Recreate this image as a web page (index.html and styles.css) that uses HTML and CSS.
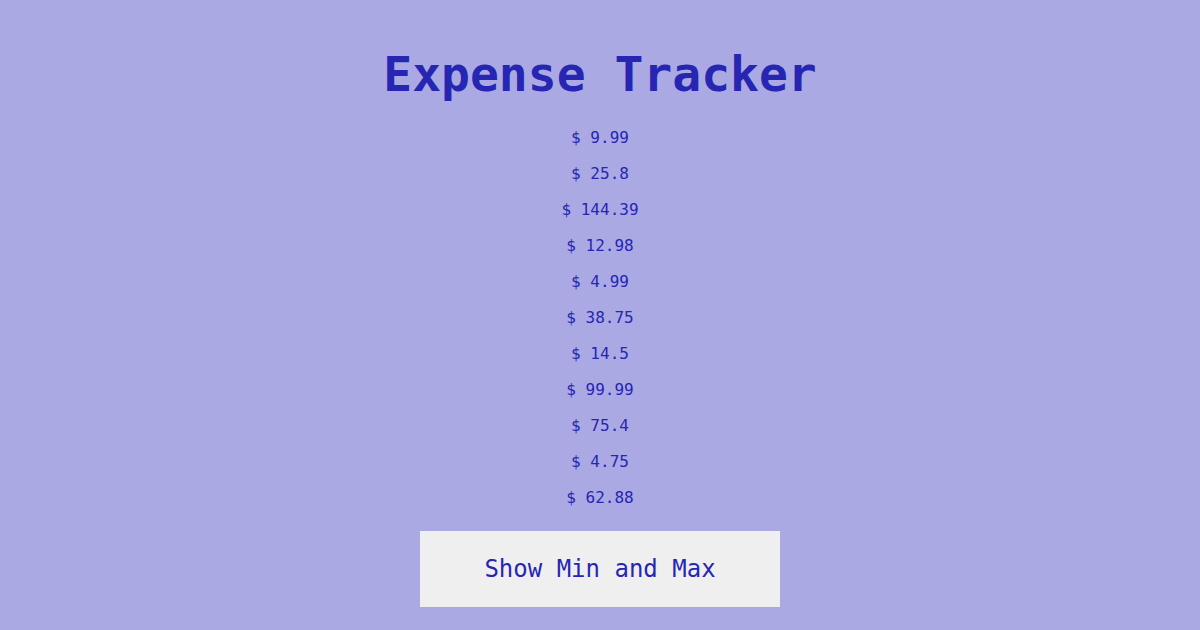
FILE: index.html
```html
<!DOCTYPE html>
<html lang="en">
<head>
    <meta charset="UTF-8">
    <meta name="viewport" content="width=device-width, initial-scale=1.0">
    <title>Expense Tracker</title>
    <link rel="stylesheet" href="styles.css">
</head>
<body>
    <div class="container">
        <h1>Expense Tracker</h1>

        <ul class="expenses" id="expenses">
            <li>$ 9.99</li>
            <li>$ 25.8</li>
            <li>$ 144.39</li>
            <li>$ 12.98</li>
            <li>$ 4.99</li>
            <li>$ 38.75</li>
            <li>$ 14.5</li>
            <li>$ 99.99</li>
            <li>$ 75.4</li>
            <li>$ 4.75</li>
            <li>$ 62.88</li>
        </ul>

        <button id="minMaxButton">Show Min and Max</button>
    </div>
</body>
</html>
```

FILE: styles.css
```css
:root {
    --bg-color: #aaa9e3;
    --text-color: #2626b3;
    --button-color: #efefef;
}

* {
    box-sizing: border-box;
    margin: 0;
    padding: 0;
    font-family: 'DejaVu Sans Mono', 'Liberation Mono', monospace;
}

body {
    background-color: var(--bg-color);
    color: var(--text-color);
}

.container {
    display: flex;
    flex-direction: column;
    align-items: center;
    padding-top: 46px;
}

h1 {
    font-size: 48px;
    line-height: 56px;
    font-weight: bold;
    margin-bottom: 18px;
}

.expenses {
    list-style: none;
    text-align: center;
    margin-bottom: 15px;
}

.expenses li {
    font-size: 16px;
    line-height: 36px;
}

button {
    width: 360px;
    height: 76px;
    background-color: var(--button-color);
    color: var(--text-color);
    border: none;
    font-size: 24px;
    cursor: pointer;
}
```
